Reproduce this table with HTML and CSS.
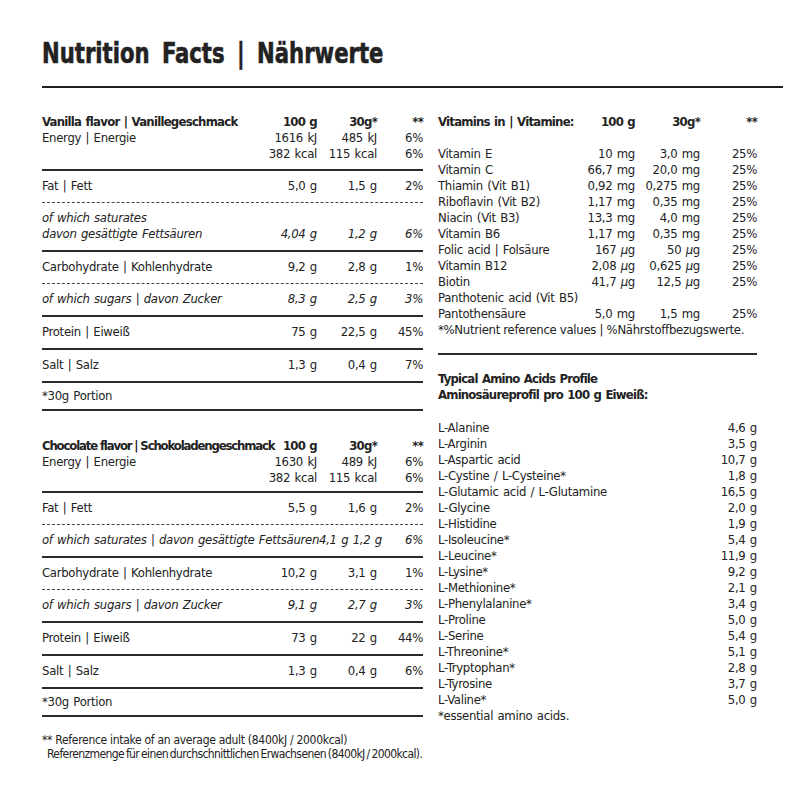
FILE: index.html
```html
<!DOCTYPE html>
<html lang="de">
<head>
<meta charset="utf-8">
<title>Nutrition Facts | Nährwerte</title>
<link rel="stylesheet" href="styles.css">
</head>
<body>
<div class="page">
  <h1 class="title"><span class="tt">Nutrition Facts | Nährwerte</span></h1>
  <div class="cols">
    <div class="left">
      <div class="nt">
        <div class="sec head">
          <div class="r b"><span>Vanilla flavor | Vanillegeschmack</span><span>100 g</span><span>30g*</span><span>**</span></div>
          <div class="r"><span>Energy | Energie</span><span>1616 kJ</span><span>485 kJ</span><span>6%</span></div>
          <div class="r"><span></span><span>382 kcal</span><span>115 kcal</span><span>6%</span></div>
        </div>
        <div class="sec row dash"><div class="r"><span>Fat | Fett</span><span>5,0 g</span><span>1,5 g</span><span>2%</span></div></div>
        <div class="sec row i">
          <div class="r"><span>of which saturates</span><span></span><span></span><span></span></div>
          <div class="r"><span>davon gesättigte Fettsäuren</span><span>4,04 g</span><span>1,2 g</span><span>6%</span></div>
        </div>
        <div class="sec row dash"><div class="r"><span>Carbohydrate | Kohlenhydrate</span><span>9,2 g</span><span>2,8 g</span><span>1%</span></div></div>
        <div class="sec row i"><div class="r"><span>of which sugars | davon Zucker</span><span>8,3 g</span><span>2,5 g</span><span>3%</span></div></div>
        <div class="sec row"><div class="r"><span>Protein | Eiweiß</span><span>75 g</span><span>22,5 g</span><span>45%</span></div></div>
        <div class="sec row"><div class="r"><span>Salt | Salz</span><span>1,3 g</span><span>0,4 g</span><span>7%</span></div></div>
        <div class="sec portion">*30g Portion</div>
      </div>

      <div class="nt choc">
        <div class="sec head">
          <div class="r b"><span class="squeeze">Chocolate flavor | Schokoladengeschmack</span><span>100 g</span><span>30g*</span><span>**</span></div>
          <div class="r"><span>Energy | Energie</span><span>1630 kJ</span><span>489 kJ</span><span>6%</span></div>
          <div class="r"><span></span><span>382 kcal</span><span>115 kcal</span><span>6%</span></div>
        </div>
        <div class="sec row dash"><div class="r"><span>Fat | Fett</span><span>5,5 g</span><span>1,6 g</span><span>2%</span></div></div>
        <div class="sec row i"><div class="r"><span class="span3">of which saturates | davon gesättigte Fettsäuren4,1 g 1,2 g</span><span>6%</span></div></div>
        <div class="sec row dash"><div class="r"><span>Carbohydrate | Kohlenhydrate</span><span>10,2 g</span><span>3,1 g</span><span>1%</span></div></div>
        <div class="sec row i"><div class="r"><span>of which sugars | davon Zucker</span><span>9,1 g</span><span>2,7 g</span><span>3%</span></div></div>
        <div class="sec row"><div class="r"><span>Protein | Eiweiß</span><span>73 g</span><span>22 g</span><span>44%</span></div></div>
        <div class="sec row"><div class="r"><span>Salt | Salz</span><span>1,3 g</span><span>0,4 g</span><span>6%</span></div></div>
        <div class="sec portion">*30g Portion</div>
      </div>

      <div class="foot">
        <div>** Reference intake of an average adult (8400kJ / 2000kcal)</div>
        <div class="tight">Referenzmenge für einen durchschnittlichen Erwachsenen (8400kJ / 2000kcal).</div>
      </div>
    </div>

    <div class="right">
      <div class="vit">
        <div class="vr b"><span>Vitamins in | Vitamine:</span><span>100 g</span><span>30g*</span><span>**</span></div>
        <div class="vr blank"><span>&nbsp;</span></div>
        <div class="vr"><span>Vitamin E</span><span>10 mg</span><span>3,0 mg</span><span>25%</span></div>
        <div class="vr"><span>Vitamin C</span><span>66,7 mg</span><span>20,0 mg</span><span>25%</span></div>
        <div class="vr"><span>Thiamin (Vit B1)</span><span>0,92 mg</span><span>0,275 mg</span><span>25%</span></div>
        <div class="vr"><span>Riboflavin (Vit B2)</span><span>1,17 mg</span><span>0,35 mg</span><span>25%</span></div>
        <div class="vr"><span>Niacin (Vit B3)</span><span>13,3 mg</span><span>4,0 mg</span><span>25%</span></div>
        <div class="vr"><span>Vitamin B6</span><span>1,17 mg</span><span>0,35 mg</span><span>25%</span></div>
        <div class="vr"><span>Folic acid | Folsäure</span><span>167 <i>µ</i>g</span><span>50 <i>µ</i>g</span><span>25%</span></div>
        <div class="vr"><span>Vitamin B12</span><span>2,08 <i>µ</i>g</span><span>0,625 <i>µ</i>g</span><span>25%</span></div>
        <div class="vr"><span>Biotin</span><span>41,7 <i>µ</i>g</span><span>12,5 <i>µ</i>g</span><span>25%</span></div>
        <div class="vr"><span>Panthotenic acid (Vit B5)</span><span></span><span></span><span></span></div>
        <div class="vr"><span>Pantothensäure</span><span>5,0 mg</span><span>1,5 mg</span><span>25%</span></div>
        <div class="vnote">*%Nutrient reference values | %Nährstoffbezugswerte.</div>
      </div>

      <div class="amino">
        <div class="ahead">
          <div>Typical Amino Acids Profile</div>
          <div>Aminosäureprofil pro 100 g Eiweiß:</div>
        </div>
        <div class="alist">
          <div class="ar"><span>L-Alanine</span><span>4,6 g</span></div>
          <div class="ar"><span>L-Arginin</span><span>3,5 g</span></div>
          <div class="ar"><span>L-Aspartic acid</span><span>10,7 g</span></div>
          <div class="ar"><span>L-Cystine / L-Cysteine*</span><span>1,8 g</span></div>
          <div class="ar"><span>L-Glutamic acid / L-Glutamine</span><span>16,5 g</span></div>
          <div class="ar"><span>L-Glycine</span><span>2,0 g</span></div>
          <div class="ar"><span>L-Histidine</span><span>1,9 g</span></div>
          <div class="ar"><span>L-Isoleucine*</span><span>5,4 g</span></div>
          <div class="ar"><span>L-Leucine*</span><span>11,9 g</span></div>
          <div class="ar"><span>L-Lysine*</span><span>9,2 g</span></div>
          <div class="ar"><span>L-Methionine*</span><span>2,1 g</span></div>
          <div class="ar"><span>L-Phenylalanine*</span><span>3,4 g</span></div>
          <div class="ar"><span>L-Proline</span><span>5,0 g</span></div>
          <div class="ar"><span>L-Serine</span><span>5,4 g</span></div>
          <div class="ar"><span>L-Threonine*</span><span>5,1 g</span></div>
          <div class="ar"><span>L-Tryptophan*</span><span>2,8 g</span></div>
          <div class="ar"><span>L-Tyrosine</span><span>3,7 g</span></div>
          <div class="ar"><span>L-Valine*</span><span>5,0 g</span></div>
          <div class="anote">*essential amino acids.</div>
        </div>
      </div>
    </div>
  </div>
</div>
</body>
</html>
```

FILE: styles.css
```css
* { box-sizing: border-box; }
html, body { margin: 0; padding: 0; background: #fff; }
body {
  font-family: "DejaVu Sans Condensed", "DejaVu Sans", "Liberation Sans", sans-serif;
  font-stretch: condensed;
  color: #222;
  font-size: 13px;
  line-height: 16px;
  letter-spacing: -0.3px;
  word-spacing: 1px;
}
.page { padding: 37px 0 0 42px; width: 800px; height: 800px; overflow: hidden; }

.title {
  margin: 0;
  width: 741px;
  font-size: 28px;
  line-height: 34px;
  font-weight: bold;
  padding-bottom: 15px;
  border-bottom: 2px solid #1e1e1e;
  letter-spacing: 0;
  word-spacing: 0;
  white-space: nowrap;
}
.tt {
  display: inline-block;
  transform: scaleX(0.84);
  transform-origin: left center;
  word-spacing: 6px;
  -webkit-text-stroke: 0.6px #222;
}

.cols { display: flex; margin-top: 26px; }
.left { width: 381px; }
.right { width: 319px; margin-left: 15px; }

.r {
  display: grid;
  grid-template-columns: minmax(0, 1fr) 60px 60px 46px;
}
.r > span { white-space: nowrap; }
.r > span:not(:first-child) { text-align: right; }
.r > span.span3 { grid-column: 1 / 4; }
.b { font-weight: bold; letter-spacing: -0.75px; word-spacing: 1px; }
.b .squeeze { letter-spacing: -1.15px; word-spacing: 0; }
.i { font-style: italic; }

.sec { border-bottom: 2px solid #2a2a2a; }
.sec.dash { border-bottom: 1px dashed #444; }
.head { padding-bottom: 7px; }
.choc .head { padding-bottom: 5px; }
.row { padding: 7px 0 8px; }
.portion { padding: 5px 0 5px; }

.choc { margin-top: 27px; }

.foot {
  margin-top: 17px;
  font-size: 12px;
  line-height: 13.5px;
  white-space: nowrap;
  word-spacing: 0;
}
.foot .tight { padding-left: 5px; letter-spacing: -0.6px; word-spacing: -1px; }

.vr {
  display: grid;
  grid-template-columns: minmax(0, 1fr) 62px 65px 57px;
}
.vr > span { white-space: nowrap; }
.vr > span:not(:first-child) { text-align: right; }
.vr i { font-style: italic; }
.vnote { white-space: nowrap; word-spacing: 0; }
.vit { padding-bottom: 15px; border-bottom: 2px solid #2a2a2a; }

.ahead { margin-top: 16px; font-weight: bold; letter-spacing: -0.8px; word-spacing: 1px; }
.alist { margin-top: 17px; }
.ar { display: flex; justify-content: space-between; }
```
